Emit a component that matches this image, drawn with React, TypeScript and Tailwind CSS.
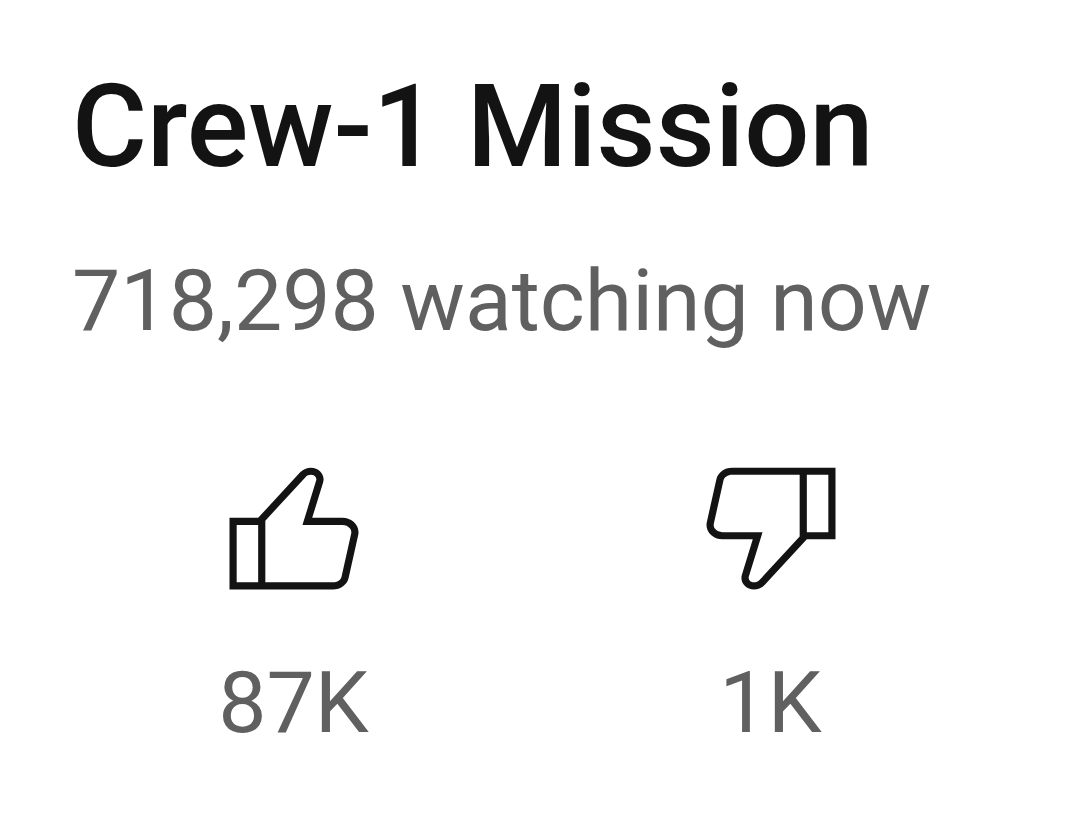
const LIKE_PATH =
  "M18.77,11h-4.23l1.52-4.94C16.38,5.03,15.54,4,14.38,4c-0.58,0-1.14,0.24-1.52,0.65L7,11H3v10h4h1h9.43c1.06,0,1.98-0.67,2.19-1.61l1.34-6C21.23,12.15,20.18,11,18.77,11z M7,20H4v-8h3V20z M19.98,13.17l-1.34,6C18.54,19.65,18.03,20,17.43,20H8v-8.61l5.6-6.06C13.79,5.12,14.08,5,14.38,5c0.26,0,0.5,0.11,0.63,0.3c0.07,0.1,0.15,0.26,0.09,0.47l-1.52,4.94L13.18,12h1.35h4.23c0.41,0,0.8,0.17,1.03,0.46C19.92,12.61,20.05,12.86,19.98,13.17z";
const DISLIKE_PATH =
  "M17,4h-1H6.57C5.5,4,4.59,4.67,4.38,5.61l-1.34,6C2.77,12.85,3.82,14,5.23,14h4.23l-1.52,4.94C7.62,19.97,8.46,21,9.62,21c0.58,0,1.14-0.24,1.52-0.65L17,14h4V4H17z M10.4,19.67C10.21,19.88,9.92,20,9.62,20c-0.26,0-0.5-0.11-0.63-0.3c-0.07-0.1-0.15-0.26-0.09-0.47l1.52-4.94l0.4-1.29H9.46H5.23c-0.41,0-0.8-0.17-1.03-0.46c-0.12-0.15-0.25-0.4-0.18-0.72l1.34-6C5.46,5.35,5.97,5,6.57,5H16v8.61L10.4,19.67z M20,13h-3V5h3V13z";

const ACTIONS = [
  { key: "like", label: "Like", count: "87K", path: LIKE_PATH },
  { key: "dislike", label: "Dislike", count: "1K", path: DISLIKE_PATH },
];

export default function App() {
  return (
    <main className="min-h-screen bg-white pt-[61px] font-[Roboto,sans-serif]">
      {/* Title and viewer count */}
      <div className="px-[72px]">
        <h1 className="text-[115px] leading-[132px] font-medium text-[#131313]">Crew-1 Mission</h1>
        <p className="mt-12 text-[86px] leading-[120px] text-[#606060]">718,298 watching now</p>
      </div>

      {/* Rating buttons */}
      <div className="mt-[78px] grid grid-cols-2 pr-[71px] pl-[55px]">
        {ACTIONS.map(action => (
          <button
            key={action.key}
            aria-label={`${action.label} ${action.count}`}
            className="flex flex-col items-center gap-8"
          >
            <svg viewBox="0 0 24 24" className="size-[172px]" fill="#131313" aria-hidden="true">
              <path d={action.path} />
            </svg>
            <span className="text-[86px] leading-[120px] text-[#606060]">{action.count}</span>
          </button>
        ))}
      </div>
    </main>
  );
}
